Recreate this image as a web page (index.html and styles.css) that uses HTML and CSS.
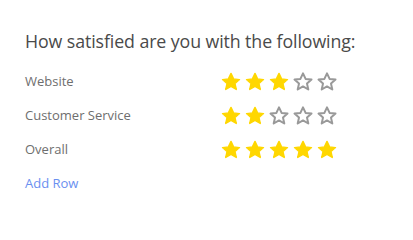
FILE: index.html
```html
<!DOCTYPE html>
<html>
<head>
<meta charset="utf-8">
<link rel="stylesheet" href="styles.css">
</head>
<body>
<svg width="0" height="0" class="defs">
  <defs>
    <path id="star" d="M10 1.4 L12.6 6.9 L18.5 7.6 L14 11.6 L15.3 17.5 L10 14.4 L4.7 17.5 L6 11.6 L1.5 7.6 L7.4 6.9 Z"/>
  </defs>
</svg>
<div class="survey">
  <h2 class="title">How satisfied are you with the following:</h2>
  <div class="row">
    <span class="label">Website</span>
    <span class="stars">
      <svg class="star on" viewBox="0 0 20 19"><use href="#star"/></svg>
      <svg class="star on" viewBox="0 0 20 19"><use href="#star"/></svg>
      <svg class="star on" viewBox="0 0 20 19"><use href="#star"/></svg>
      <svg class="star off" viewBox="0 0 20 19"><use href="#star"/></svg>
      <svg class="star off" viewBox="0 0 20 19"><use href="#star"/></svg>
    </span>
  </div>
  <div class="row">
    <span class="label">Customer Service</span>
    <span class="stars">
      <svg class="star on" viewBox="0 0 20 19"><use href="#star"/></svg>
      <svg class="star on" viewBox="0 0 20 19"><use href="#star"/></svg>
      <svg class="star off" viewBox="0 0 20 19"><use href="#star"/></svg>
      <svg class="star off" viewBox="0 0 20 19"><use href="#star"/></svg>
      <svg class="star off" viewBox="0 0 20 19"><use href="#star"/></svg>
    </span>
  </div>
  <div class="row">
    <span class="label">Overall</span>
    <span class="stars">
      <svg class="star on" viewBox="0 0 20 19"><use href="#star"/></svg>
      <svg class="star on" viewBox="0 0 20 19"><use href="#star"/></svg>
      <svg class="star on" viewBox="0 0 20 19"><use href="#star"/></svg>
      <svg class="star on" viewBox="0 0 20 19"><use href="#star"/></svg>
      <svg class="star on" viewBox="0 0 20 19"><use href="#star"/></svg>
    </span>
  </div>
  <div class="row">
    <a class="add" href="#">Add Row</a>
  </div>
</div>
</body>
</html>
```
FILE: styles.css
```css
html, body {
  margin: 0;
  padding: 0;
  background: #ffffff;
}
.defs {
  position: absolute;
  width: 0;
  height: 0;
}
.survey {
  padding: 30px 0 0 25px;
  font-family: "Open Sans", "Noto Sans", sans-serif;
}
.title {
  margin: 0 0 12px 0;
  font-size: 17.8px;
  font-weight: 400;
  color: #4a4a4a;
  line-height: 22px;
  letter-spacing: -0.1px;
}
.row {
  display: flex;
  align-items: center;
  height: 34px;
}
.label {
  width: 196px;
  font-size: 13px;
  color: #6e6e6e;
}
.stars {
  display: flex;
  gap: 4px;
}
.star {
  width: 20px;
  height: 19px;
  display: block;
}
.star.on {
  fill: #ffd700;
  stroke: #ffd700;
  stroke-width: 1.4;
  stroke-linejoin: round;
}
.star.off {
  fill: none;
  stroke: #999999;
  stroke-width: 2;
  stroke-linejoin: round;
}
.add {
  font-size: 13px;
  color: #6a8ff0;
  text-decoration: none;
}
```
